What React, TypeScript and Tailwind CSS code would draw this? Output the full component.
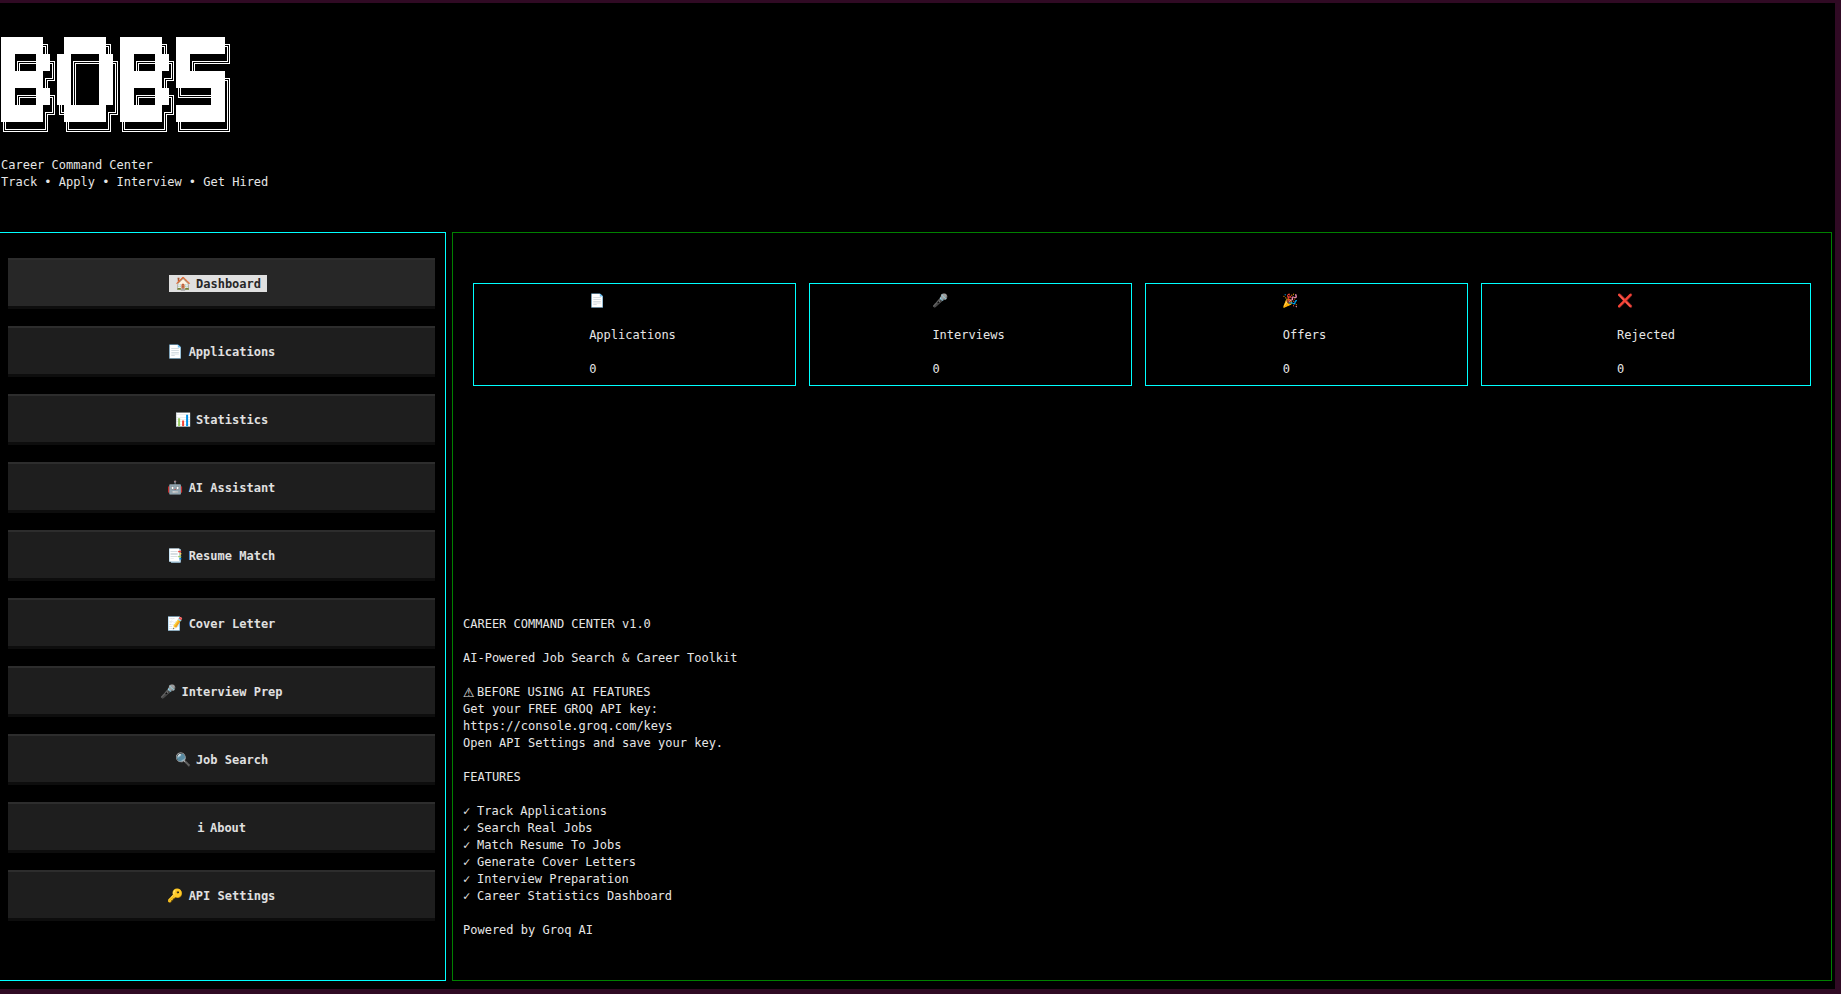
import React from "react";

const LOGO = [
  "██████╗  ██████╗ ██████╗ ███████╗",
  "██╔══██╗██╔═══██╗██╔══██╗██╔════╝",
  "██████╔╝██║   ██║██████╔╝███████╗",
  "██╔══██╗██║   ██║██╔══██╗╚════██║",
  "██████╔╝╚██████╔╝██████╔╝███████║",
  "╚═════╝  ╚═════╝ ╚═════╝ ╚══════╝",
];

const CELL_W = 7;
const CELL_H = 17;

// Strokes of each double-line cell as [x, y, width, height].
const STROKES: Record<string, number[][]> = {
  "█": [[0, 0, 7, 17]],
  "═": [[0, 7, 7, 1], [0, 9, 7, 1]],
  "║": [[2, 0, 1, 17], [4, 0, 1, 17]],
  "╗": [[0, 7, 5, 1], [4, 7, 1, 10], [0, 9, 3, 1], [2, 9, 1, 8]],
  "╔": [[2, 7, 5, 1], [2, 7, 1, 10], [4, 9, 3, 1], [4, 9, 1, 8]],
  "╝": [[0, 9, 5, 1], [4, 0, 1, 10], [0, 7, 3, 1], [2, 0, 1, 8]],
  "╚": [[2, 9, 5, 1], [2, 0, 1, 10], [4, 7, 3, 1], [4, 0, 1, 8]],
};

function Logo() {
  return (
    <svg
      role="img"
      aria-label="BOBS"
      width={33 * CELL_W}
      height={6 * CELL_H}
      fill="#ffffff"
      shapeRendering="crispEdges"
      className="block"
    >
      {LOGO.flatMap((row, r) =>
        [...row].flatMap((ch, c) =>
          (STROKES[ch] ?? []).map(([x, y, w, h], i) => (
            <rect key={`${r}-${c}-${i}`} x={c * CELL_W + x} y={r * CELL_H + y} width={w} height={h} />
          )),
        ),
      )}
    </svg>
  );
}

const NAV = [
  { icon: "🏠", label: "Dashboard" },
  { icon: "📄", label: "Applications" },
  { icon: "📊", label: "Statistics" },
  { icon: "🤖", label: "AI Assistant" },
  { icon: "📑", label: "Resume Match" },
  { icon: "📝", label: "Cover Letter" },
  { icon: "🎤", label: "Interview Prep" },
  { icon: "🔍", label: "Job Search" },
  { icon: "i", label: "About" },
  { icon: "🔑", label: "API Settings" },
];

const STATS = [
  { icon: "📄", label: "Applications", value: 0 },
  { icon: "🎤", label: "Interviews", value: 0 },
  { icon: "🎉", label: "Offers", value: 0 },
  { icon: "❌", label: "Rejected", value: 0 },
];

const FEATURES = [
  "Track Applications",
  "Search Real Jobs",
  "Match Resume To Jobs",
  "Generate Cover Letters",
  "Interview Preparation",
  "Career Statistics Dashboard",
];

function NavButton({ icon, label, active }: { icon: string; label: string; active: boolean }) {
  return (
    <button
      type="button"
      className={
        active
          ? "flex h-[51px] w-full justify-center border-t-2 border-b-3 border-t-[#2d2d2d] border-b-[#0d0d0d] bg-[#272727] pt-[15px] pr-[7px] font-bold text-[#272727]"
          : "flex h-[51px] w-full justify-center border-t-2 border-b-3 border-t-[#2d2d2d] border-b-[#0d0d0d] bg-[#1e1e1e] pt-[15px] font-bold text-[#e0e0e0]"
      }
    >
      <span
        className={
          active
            ? "flex h-[17px] gap-[5px] bg-[#e0e0e0] px-[6px] pt-px"
            : "flex h-[17px] gap-[5px] px-[6px] pt-px"
        }
      >
        <span className={icon === "i" ? "w-2" : "w-4 text-[13px] leading-[15px]"}>{icon}</span>
        <span>{label}</span>
      </span>
    </button>
  );
}

export default function App() {
  return (
    <div className="flex min-h-screen flex-col border-t-3 border-r-6 border-b-5 border-[#300a24] bg-black font-['DejaVu_Sans_Mono','Noto_Color_Emoji',monospace] text-[12px] leading-[17px] text-[#e6e6e6]">
      <header className="pt-[34px] pl-px">
        <Logo />
        <p className="mt-[18px]">Career Command Center</p>
        <p>Track • Apply • Interview • Get Hired</p>
      </header>

      <div className="mt-[41px] mb-2 flex flex-1 gap-[6px] pr-[3px]">
        <nav className="flex w-[446px] shrink-0 flex-col gap-[17px] border-y border-r border-[#00ffff] pt-[25px] pr-[10px] pb-[25px] pl-2">
          {NAV.map((item, i) => (
            <NavButton key={item.label} icon={item.icon} label={item.label} active={i === 0} />
          ))}
        </nav>

        <main className="flex min-w-0 flex-1 flex-col justify-between border border-[#008000] pt-[50px] pr-5 pb-[41px] pl-5">
          <section className="grid grid-cols-[323fr_323fr_323fr_330fr] gap-[13px]">
            {STATS.map((s) => (
              <div key={s.label} className="flex justify-center border border-[#00ffff] pt-[9px] pr-1 pb-[7px] last:pr-0">
                <div className="flex flex-col gap-[17px]">
                  <span className="h-[17px] text-[13px] leading-[15px]">{s.icon}</span>
                  <span>{s.label}</span>
                  <span>{s.value}</span>
                </div>
              </div>
            ))}
          </section>

          <section className="-ml-[10px] flex flex-col gap-[17px]">
            <h1>CAREER COMMAND CENTER v1.0</h1>
            <p>AI-Powered Job Search &amp; Career Toolkit</p>
            <div>
              <p className="flex">
                <span className="w-[14px] font-['DejaVu_Sans',sans-serif] text-[13px] leading-[17px]">⚠</span>
                <span>BEFORE USING AI FEATURES</span>
              </p>
              <p>Get your FREE GROQ API key:</p>
              <p>
                <a href="https://console.groq.com/keys">https://console.groq.com/keys</a>
              </p>
              <p>Open API Settings and save your key.</p>
            </div>
            <h2>FEATURES</h2>
            <ul>
              {FEATURES.map((f) => (
                <li key={f} className="flex gap-[7px]">
                  <span className="w-[7px]">✓</span>
                  <span>{f}</span>
                </li>
              ))}
            </ul>
            <p>Powered by Groq AI</p>
          </section>
        </main>
      </div>
    </div>
  );
}
